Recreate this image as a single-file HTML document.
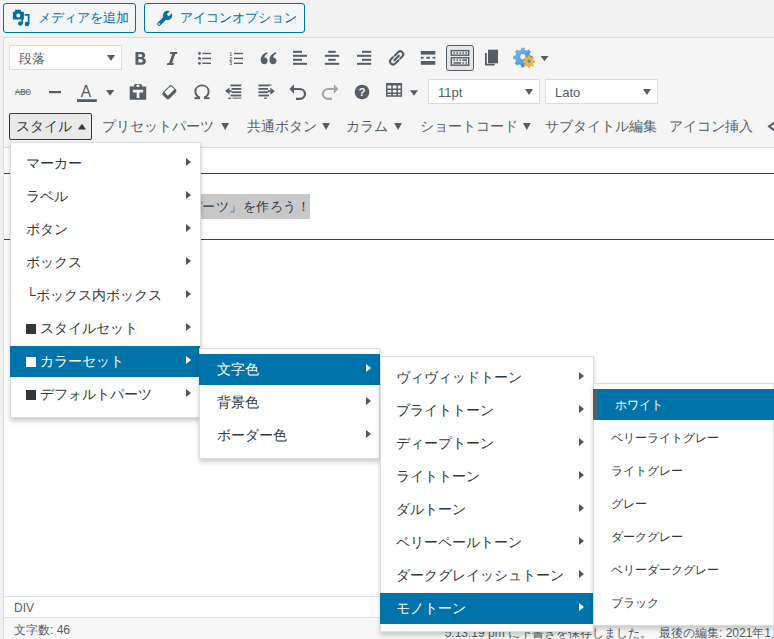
<!DOCTYPE html>
<html><head><meta charset="utf-8">
<style>
*{box-sizing:border-box}
html,body{margin:0;padding:0;width:774px;height:639px;overflow:hidden;background:#f1f1f1;font-family:"Liberation Sans",sans-serif;color:#32373c}
.abs{position:absolute}
.btn{position:absolute;top:3px;height:30px;border:1px solid #0071a1;border-radius:3px;background:#f3f5f6;color:#0071a1;font-size:13px;line-height:28px;white-space:nowrap}
.editor{position:absolute;left:3px;top:37px;width:771px;height:602px;border:1px solid #dcdcdc;border-right:none;border-bottom:none;background:#fff}
.tb{position:absolute;left:4px;top:38px;width:770px;height:110px;background:#f5f5f5;border-bottom:1px solid #dcdcdc}
.sel{position:absolute;height:25px;background:#fff;border:1px solid #dcdcdc;font-size:13px;line-height:25px;color:#555d66;padding-left:9px}
.sel .ar{position:absolute;right:6px;top:9px;width:0;height:0;border-left:4px solid transparent;border-right:4px solid transparent;border-top:6px solid #555d66}
.ic{position:absolute;fill:#555d66}
.t3{position:absolute;top:116px;font-size:14px;line-height:20px;color:#555d66;white-space:nowrap}
.menu{position:absolute;z-index:10;background:#fff;border:1px solid #ddd;box-shadow:0 3px 5px rgba(0,0,0,.2)}
.mi{position:absolute;height:31px;font-size:14px;line-height:31px;white-space:nowrap;color:#32373c}
.mi.on{background:#0073aa;color:#fff}
.arr{position:absolute;width:0;height:0;border-top:4px solid transparent;border-bottom:4px solid transparent;border-left:5px solid #555}
.mi.on .arr{border-left-color:#fff}
.sq{display:inline-block;width:10px;height:10px;background:#32373c;margin-right:4px;vertical-align:-1px}
.mi.on .sq{background:#fff}
</style></head><body>

<!-- media buttons -->
<div class="btn" style="left:3px;width:133px;padding-left:34px">メディアを追加</div>
<div class="btn" style="left:144px;width:161px;padding-left:35px">アイコンオプション</div>

<svg class="abs" style="left:0;top:0" width="310" height="36" viewBox="0 0 310 36">
<g fill="#0071a1">
<path fill-rule="evenodd" d="M12.9,11.8h2v-1.2c0-0.5 0.4-0.8 0.8-0.8h4.6c0.4,0 0.8,0.3 0.8,0.8v1.2h2.8v7.8h-11z M16.3,15.5a2,2 0 1 0 4,0a2,2 0 1 0 -4,0z"/>
<rect x="21.3" y="19" width="1.7" height="4.5"/>
<circle cx="20.3" cy="23.5" r="2.3"/>
<path d="M24.6,14h4.9v10h-1.7v-8.3h-3.2z"/>
<circle cx="27" cy="24" r="2.3"/>
</g>
<g transform="translate(164.3,18.8) rotate(45)" fill="#0071a1">
<rect x="-1.9" y="-2" width="3.8" height="11.2" rx="1.9"/>
<circle cx="0" cy="-4.6" r="4.7"/>
<rect x="-1.5" y="-10" width="3" height="5" fill="#f3f5f6"/>
<circle cx="0" cy="7.3" r="0.9" fill="#f3f5f6"/>
</g>
</svg>
<div class="editor"></div>
<div class="tb"></div>

<!-- ICONS -->
<svg class="abs" style="left:0;top:0;z-index:5" width="774" height="150" viewBox="0 0 774 150">
<g fill="#555d66">
<!-- B -->
<path fill-rule="evenodd" d="M135.5,52h5.6c2.6,0 4.1,1.3 4.1,3.2c0,1.3-0.7,2.3-1.9,2.7c1.6,0.4 2.6,1.6 2.6,3.3c0,2.3-1.8,3.6-4.4,3.6h-6z M138.4,54.3v2.8h2.3c1,0 1.5-0.5 1.5-1.4s-0.5-1.4-1.5-1.4z M138.4,59.3v3.2h2.6c1.1,0 1.7-0.6 1.7-1.6s-0.6-1.6-1.7-1.6z"/>
<!-- I -->
<path d="M170.3,52H177.4L176.9,54.1H175.2L172.1,62.9H173.8L173.3,65H166.9L167.4,62.9H169.1L172.2,54.1H169.8Z"/>
<!-- UL -->
<circle cx="199.5" cy="53.5" r="1.4"/><circle cx="199.5" cy="58.4" r="1.4"/><circle cx="199.5" cy="63.3" r="1.4"/>
<rect x="202.3" y="52.8" width="8.7" height="1.4"/><rect x="202.3" y="57.7" width="8.7" height="1.4"/><rect x="202.3" y="62.6" width="8.7" height="1.4"/>
<!-- OL -->
<text x="229.6" y="55.6" font-size="4.6" font-family="Liberation Sans" font-weight="bold">1</text>
<text x="229.6" y="60.5" font-size="4.6" font-family="Liberation Sans" font-weight="bold">2</text>
<text x="229.6" y="65.4" font-size="4.6" font-family="Liberation Sans" font-weight="bold">3</text>
<rect x="234" y="52.8" width="9" height="1.4"/><rect x="234" y="57.7" width="9" height="1.4"/><rect x="234" y="62.6" width="9" height="1.4"/>
<!-- quote -->
<path d="M267.2,52.2l0.5,1.3c-2.2,1-3.3,2.5-3.4,4c2,0,3.4,1.4,3.4,3.3c0,1.9-1.5,3.4-3.4,3.4c-2.1,0-3.6-1.6-3.6-4.2c0-3.6,2.2-6.6,6.5-7.8z"/>
<path d="M276,52.2l0.5,1.3c-2.2,1-3.3,2.5-3.4,4c2,0,3.4,1.4,3.4,3.3c0,1.9-1.5,3.4-3.4,3.4c-2.1,0-3.6-1.6-3.6-4.2c0-3.6,2.2-6.6,6.5-7.8z"/>
<!-- align left -->
<rect x="293" y="50.8" width="9" height="2"/><rect x="293" y="54.8" width="14" height="2"/><rect x="293" y="58.8" width="9" height="2"/><rect x="293" y="62.8" width="14" height="2"/>
<!-- align center -->
<rect x="328.2" y="50.8" width="7.5" height="2"/><rect x="324.8" y="54.8" width="14.4" height="2"/><rect x="328.2" y="58.8" width="7.5" height="2"/><rect x="324.8" y="62.8" width="14.4" height="2"/>
<!-- align right -->
<rect x="362" y="50.8" width="9.2" height="2"/><rect x="357" y="54.8" width="14.2" height="2"/><rect x="362" y="58.8" width="9.2" height="2"/><rect x="357" y="62.8" width="14.2" height="2"/>
<!-- more -->
<rect x="420.8" y="51" width="14.5" height="3.6"/><rect x="420.8" y="56.8" width="2.8" height="1.9"/><rect x="426.4" y="56.8" width="3.6" height="1.9"/><rect x="432.6" y="56.8" width="2.7" height="1.9"/><rect x="420.8" y="61" width="14.5" height="3.8"/>
<!-- copy -->
<rect x="488" y="49.7" width="10" height="13.6"/>
<path d="M485,53h1.8v10.8h7.9v1.8h-9.7z"/>
<!-- more arrow -->
<path d="M540.5,56h8l-4,5.3z"/>
</g>
<!-- link -->
<g fill="none" stroke="#555d66" stroke-width="2.1" stroke-linecap="round" transform="translate(396.6,57.9) rotate(-45)">
<path d="M0.2,-3H5A3,3 0 0 1 5,3H2.2"/>
<path d="M-0.2,3H-5A3,3 0 0 1 -5,-3H-2.2"/>
<path d="M-3.2,0H3.2"/>
</g>
<!-- kitchen sink button -->
<rect x="446.5" y="45.5" width="27" height="25" rx="2.5" fill="#e6e6e6" stroke="#555d66" stroke-width="1"/>
<g fill="none" stroke="#555d66" stroke-width="1.4">
<rect x="451.3" y="50.6" width="17.4" height="4.6"/>
<rect x="451.3" y="57.8" width="17.4" height="7.4"/>
</g>
<g fill="#555d66">
<rect x="453.5" y="52.2" width="1.5" height="1.5"/><rect x="456.5" y="52.2" width="1.5" height="1.5"/><rect x="459.5" y="52.2" width="1.5" height="1.5"/><rect x="462.5" y="52.2" width="1.5" height="1.5"/><rect x="465.5" y="52.2" width="1.5" height="1.5"/>
<rect x="453.5" y="59.4" width="1.5" height="1.5"/><rect x="456.5" y="59.4" width="1.5" height="1.5"/><rect x="459.5" y="59.4" width="1.5" height="1.5"/><rect x="462.5" y="59.4" width="4.5" height="1.5"/>
<rect x="453.5" y="62.2" width="7.5" height="1.5"/><rect x="462.5" y="62.2" width="1.5" height="1.5"/><rect x="465.5" y="62.2" width="1.5" height="1.5"/>
</g>
<!-- gears -->
<g transform="translate(522.8,56.7)">
<defs><linearGradient id="gb" x1="0" y1="0" x2="1" y2="1"><stop offset="0" stop-color="#8cc0ee"/><stop offset="1" stop-color="#2f7dcc"/></linearGradient></defs><path fill="url(#gb)" d="M-1.6,-9h3.2l0.5,2.4l1.6,0.7l2.1,-1.4l2.3,2.3l-1.4,2.1l0.7,1.6l2.4,0.5v3.2l-2.4,0.5l-0.7,1.6l1.4,2.1l-2.3,2.3l-2.1,-1.4l-1.6,0.7l-0.5,2.4h-3.2l-0.5,-2.4l-1.6,-0.7l-2.1,1.4l-2.3,-2.3l1.4,-2.1l-0.7,-1.6l-2.4,-0.5v-3.2l2.4,-0.5l0.7,-1.6l-1.4,-2.1l2.3,-2.3l2.1,1.4l1.6,-0.7z"/>
<circle r="2.6" fill="#f4f4f4"/>
</g>
<g transform="translate(529,61.3)">
<path fill="#f2b33a" d="M-1,-5.5h2l0.3,1.5l1,0.4l1.3,-0.9l1.4,1.4l-0.9,1.3l0.4,1l1.5,0.3v2l-1.5,0.3l-0.4,1l0.9,1.3l-1.4,1.4l-1.3,-0.9l-1,0.4l-0.3,1.5h-2l-0.3,-1.5l-1,-0.4l-1.3,0.9l-1.4,-1.4l0.9,-1.3l-0.4,-1l-1.5,-0.3v-2l1.5,-0.3l0.4,-1l-0.9,-1.3l1.4,-1.4l1.3,0.9l1,-0.4z"/>
<circle r="1.5" fill="#3d8ee0"/>
</g>

<!-- ROW 2 -->
<g fill="#555d66">
<text x="15" y="94.8" font-size="8.4" font-family="Liberation Sans" textLength="16" lengthAdjust="spacingAndGlyphs">ABC</text>
<rect x="15" y="91.5" width="16" height="0.9"/>
<rect x="49" y="91" width="12" height="2.2"/>
<text x="80.7" y="97.4" font-size="15.6" font-family="Liberation Sans">A</text>
<rect x="77" y="99.2" width="19.8" height="2.8"/>
<path d="M106,90h8.2l-4.1,5.8z"/>
<!-- paste text -->
<path fill-rule="evenodd" d="M129.7,86.5h4.3v-1c0-1 0.8-1.6 1.6-1.6h4.8c0.8,0 1.6,0.6 1.6,1.6v1h4.2v13.2h-16.5z M136.3,85.8a1.7,1.2 0 1 0 3.4,0a1.7,1.2 0 1 0 -3.4,0z M132.8,89.8h10.4v2.7h-3.8v5.4h-2.8v-5.4h-3.8z"/>
<!-- eraser -->
<g transform="translate(169.4,92.3) rotate(-45)">
<rect x="-6.6" y="-4.6" width="13.2" height="9.2" rx="2"/>
<rect x="-3.6" y="-3.5" width="9.2" height="5" rx="0.8" fill="#fff"/>
</g>
<!-- omega -->
<path fill="none" stroke="#555d66" stroke-width="1.9" d="M199.6,97.6C196.4,95.9 195.4,93.6 195.4,91.4C195.4,87.9 198.2,85.4 202,85.4C205.8,85.4 208.6,87.9 208.6,91.4C208.6,93.6 207.6,95.9 204.4,97.6"/>
<rect x="194.5" y="97.2" width="5.6" height="1.9"/><rect x="203.9" y="97.2" width="5.5" height="1.9"/>
<!-- outdent -->
<rect x="230.5" y="84.5" width="10.8" height="1.8"/><rect x="231.5" y="88" width="9.8" height="1.8"/><rect x="231.5" y="91.3" width="9.8" height="1.8"/><rect x="230.5" y="94.6" width="10.8" height="1.8"/>
<rect x="228" y="97.6" width="3" height="1.2"/><rect x="232.5" y="97.6" width="8.8" height="1"/>
<path d="M225,91l4.5,-3.6v7.2z"/><rect x="229" y="90.2" width="2.5" height="1.8"/>
<!-- indent -->
<rect x="258.5" y="84.5" width="10.5" height="1.8"/><rect x="258.5" y="88" width="9.6" height="1.8"/><rect x="258.5" y="91.3" width="9.6" height="1.8"/><rect x="258.5" y="94.6" width="10.5" height="1.8"/>
<rect x="268.5" y="84.5" width="3" height="1.1"/><rect x="264" y="97.6" width="3" height="1.2"/>
<path d="M274.8,91.2l-4.5,-3.6v7.2z"/><rect x="268" y="90.3" width="2.5" height="1.8"/>
<!-- help -->
<circle cx="362" cy="92" r="7.3"/>
<text x="358.6" y="96.4" font-size="11.5" font-family="Liberation Sans" font-weight="bold" fill="#f5f5f5">?</text>
<!-- table -->
<path fill-rule="evenodd" d="M386,83.1h16.1v13.6h-16.1z M387.5,85.5v3h3.8v-3z M392.8,85.5v3h3.6v-3z M397.9,85.5v3h2.7v-3z M387.5,89.9v2.7h3.8v-2.7z M392.8,89.9v2.7h3.6v-2.7z M397.9,89.9v2.7h2.7v-2.7z M387.5,94v1.3h3.8v-1.3z M392.8,94v1.3h3.6v-1.3z M397.9,94v1.3h2.7v-1.3z"/>
<path d="M410,90.2h8l-4,5.6z"/>
<!-- row3 arrows -->
<path d="M221.3,123h7.7l-3.85,6.9z"/>
<path d="M322.2,123h7.7l-3.85,6.9z"/>
<path d="M394.2,123h7.7l-3.85,6.9z"/>
<path d="M523,123h7.7l-3.85,6.9z"/>
<path fill="#32373c" d="M77.9,129.5h8.1l-4.05,-5.8z"/>
<path d="M774,121.4l-6.6,5l6.6,5v-2.6l-3.2,-2.4l3.2,-2.4z"/>
</g>
<!-- undo/redo -->
<g fill="none" stroke="#555d66" stroke-width="2.2">
<path d="M292.5,89h7c3.2,0 5.5,2.3 5.5,5s-2.3,4.8-5.5,4.8h-3.5"/>
</g>
<path fill="#555d66" d="M289.5,89l4.5,-4.8v9.6z"/>
<g fill="none" stroke="#a0a5aa" stroke-width="2.2">
<path d="M335.4,89h-7c-3.2,0-5.5,2.3-5.5,5s2.3,4.8 5.5,4.8h3.5"/>
</g>
<path fill="#a0a5aa" d="M338.4,89l-4.5,-4.8v9.6z"/>
</svg>
<!-- /ICONS -->
<!-- row1 -->
<div class="sel" style="left:9px;top:45px;width:113px">段落<span class="ar"></span></div>

<!-- row2 -->
<div class="sel" style="left:428px;top:79px;width:112px">11pt<span class="ar"></span></div>
<div class="sel" style="left:545px;top:79px;width:113px">Lato<span class="ar"></span></div>

<!-- row3 -->
<div class="abs" style="left:9px;top:113px;width:83px;height:27px;border:1px solid #32373c;border-radius:2px;background:#e9e9e9"></div>
<div class="t3" style="left:16px;color:#32373c">スタイル</div>
<div class="t3" style="left:102px">プリセットパーツ</div>
<div class="t3" style="left:247px">共通ボタン</div>
<div class="t3" style="left:346px">カラム</div>
<div class="t3" style="left:420px">ショートコード</div>
<div class="t3" style="left:545px">サブタイトル編集</div>
<div class="t3" style="left:669px">アイコン挿入</div>

<!-- content -->
<div class="abs" style="left:4px;top:173px;width:770px;height:1px;background:#005096"></div>
<div class="abs" style="left:4px;top:239px;width:770px;height:1px;background:#005096"></div>
<div class="abs" style="right:464px;top:194px;height:25px;line-height:25px;background:#c8c8c8;font-size:13px;letter-spacing:0.5px;color:#32373c;white-space:nowrap">「プリセットパーツ」を作ろう！</div>

<!-- status -->
<div class="abs" style="left:4px;top:596px;width:770px;height:1px;background:#e2e4e7"></div>
<div class="abs" style="left:14px;top:600px;font-size:12px;line-height:16px;color:#555d66">DIV</div>
<div class="abs" style="left:4px;top:617px;width:770px;height:22px;background:#f7f7f7;border-top:1px solid #e2e4e7"></div>
<div class="abs" style="left:14px;top:622px;font-size:12px;line-height:16px;color:#555d66">文字数: 46</div>

<div class="abs" style="left:300px;top:625px;width:352px;text-align:right;font-size:12px;line-height:16px;color:#555d66;white-space:nowrap">5:13:19 pm に下書きを保存しました。</div>
<div class="abs" style="left:659px;top:625px;font-size:12px;line-height:16px;color:#555d66;white-space:nowrap">最後の編集: 2021年1月5日</div>
<!-- menus -->
<div class="menu" style="left:10px;top:142px;width:191px;height:276px">
<div class="mi" style="left:-1px;top:5px;width:190px;padding-left:16px">マーカー<span class="arr" style="left:176px;top:10px"></span></div>
<div class="mi" style="left:-1px;top:38px;width:190px;padding-left:16px">ラベル<span class="arr" style="left:176px;top:10px"></span></div>
<div class="mi" style="left:-1px;top:71px;width:190px;padding-left:16px">ボタン<span class="arr" style="left:176px;top:10px"></span></div>
<div class="mi" style="left:-1px;top:104px;width:190px;padding-left:16px">ボックス<span class="arr" style="left:176px;top:10px"></span></div>
<div class="mi" style="left:-1px;top:137px;width:190px;padding-left:16px">└ボックス内ボックス<span class="arr" style="left:176px;top:10px"></span></div>
<div class="mi" style="left:-1px;top:170px;width:190px;padding-left:16px"><span class="sq"></span>スタイルセット<span class="arr" style="left:176px;top:10px"></span></div>
<div class="mi on" style="left:-1px;top:203px;width:190px;padding-left:16px"><span class="sq"></span>カラーセット<span class="arr" style="left:176px;top:10px"></span></div>
<div class="mi" style="left:-1px;top:236px;width:190px;padding-left:16px"><span class="sq"></span>デフォルトパーツ<span class="arr" style="left:176px;top:10px"></span></div>
</div>
<div class="menu" style="left:199px;top:348px;width:181px;height:111px">
<div class="mi on" style="left:-1px;top:5px;width:181px;padding-left:18px">文字色<span class="arr" style="left:167px;top:10px"></span></div>
<div class="mi" style="left:-1px;top:38px;width:181px;padding-left:18px">背景色<span class="arr" style="left:167px;top:10px"></span></div>
<div class="mi" style="left:-1px;top:71px;width:181px;padding-left:18px">ボーダー色<span class="arr" style="left:167px;top:10px"></span></div>
</div>
<div class="menu" style="left:380px;top:356px;width:214px;height:276px">
<div class="mi" style="left:-1px;top:5px;width:214px;padding-left:16px">ヴィヴィッドトーン<span class="arr" style="left:199px;top:10px"></span></div>
<div class="mi" style="left:-1px;top:38px;width:214px;padding-left:16px">ブライトトーン<span class="arr" style="left:199px;top:10px"></span></div>
<div class="mi" style="left:-1px;top:71px;width:214px;padding-left:16px">ディープトーン<span class="arr" style="left:199px;top:10px"></span></div>
<div class="mi" style="left:-1px;top:104px;width:214px;padding-left:16px">ライトトーン<span class="arr" style="left:199px;top:10px"></span></div>
<div class="mi" style="left:-1px;top:137px;width:214px;padding-left:16px">ダルトーン<span class="arr" style="left:199px;top:10px"></span></div>
<div class="mi" style="left:-1px;top:170px;width:214px;padding-left:16px">ベリーペールトーン<span class="arr" style="left:199px;top:10px"></span></div>
<div class="mi" style="left:-1px;top:203px;width:214px;padding-left:16px">ダークグレイッシュトーン<span class="arr" style="left:199px;top:10px"></span></div>
<div class="mi on" style="left:-1px;top:236px;width:214px;padding-left:16px">モノトーン<span class="arr" style="left:199px;top:10px"></span></div>
</div>
<div class="menu" style="left:593px;top:383px;width:181px;height:243px">
<div class="mi on" style="left:-1px;top:5px;width:182px;padding-left:17px;font-size:12px;letter-spacing:0;line-height:33px;border-left:5px solid #555d66">ホワイト</div>
<div class="mi" style="left:-1px;top:38px;width:182px;padding-left:18px;font-size:12px;letter-spacing:0;line-height:33px">ベリーライトグレー</div>
<div class="mi" style="left:-1px;top:71px;width:182px;padding-left:18px;font-size:12px;letter-spacing:0;line-height:33px">ライトグレー</div>
<div class="mi" style="left:-1px;top:104px;width:182px;padding-left:18px;font-size:12px;letter-spacing:0;line-height:33px">グレー</div>
<div class="mi" style="left:-1px;top:137px;width:182px;padding-left:18px;font-size:12px;letter-spacing:0;line-height:33px">ダークグレー</div>
<div class="mi" style="left:-1px;top:170px;width:182px;padding-left:18px;font-size:12px;letter-spacing:0;line-height:33px">ベリーダークグレー</div>
<div class="mi" style="left:-1px;top:203px;width:182px;padding-left:18px;font-size:12px;letter-spacing:0;line-height:33px">ブラック</div>
</div>

</body></html>
